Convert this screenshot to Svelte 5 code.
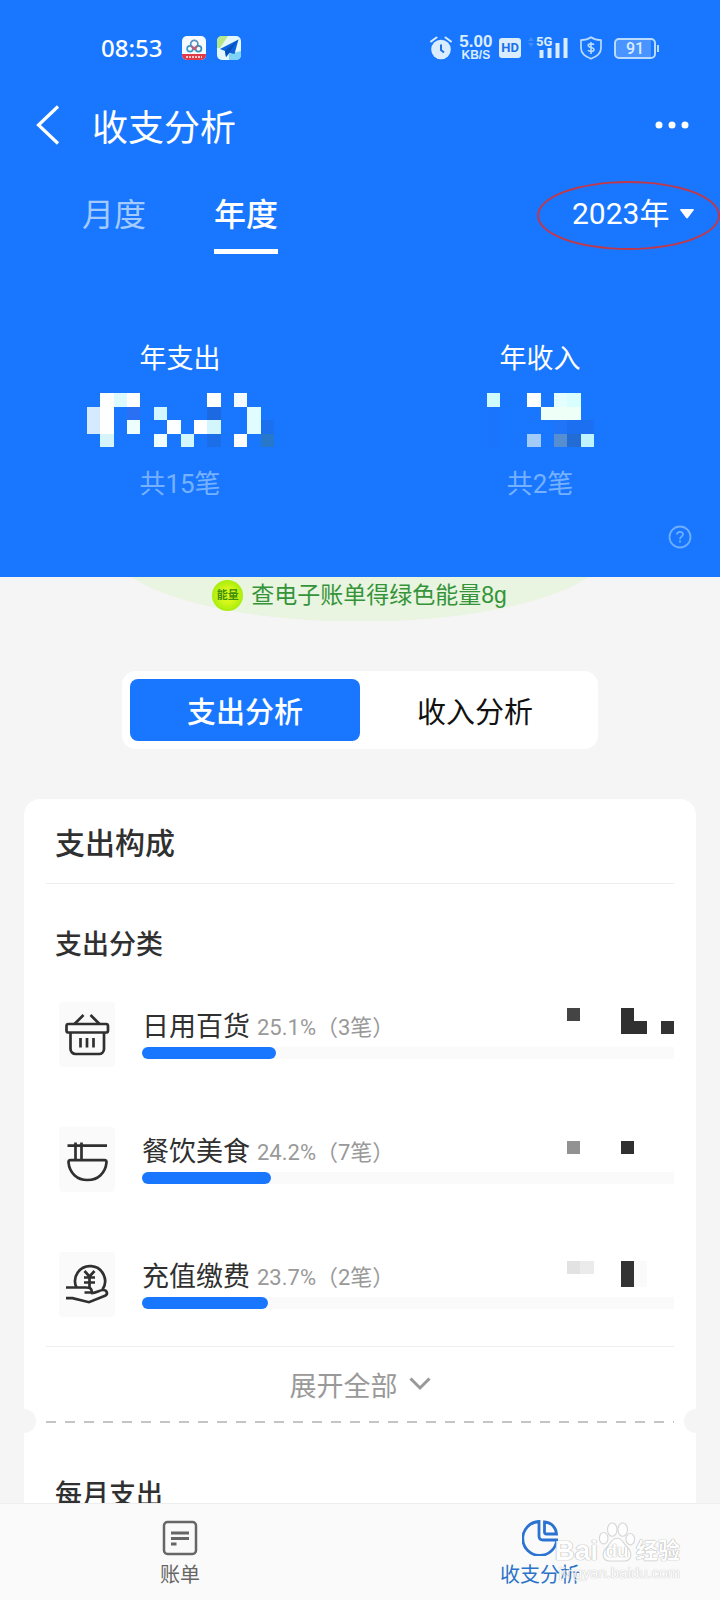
<script>
	let period = 'year'; // 'month' or 'year'
	let year = '2023';
	let analysis = 'expense'; // 'expense' or 'income'

	// Masked amounts: [column, row, width, height, colour] in mask cells
	const totals = [
		{
			label: '年支出',
			count: '共15笔',
			columns: 14,
			cells: [
				[1, 0, 1, 3, '#fdffff'], [2, 0, 1, 1, '#dcfbff'], [3, 0, 1, 1, '#ffffff'],
				[9, 0, 1, 1, '#ffffff'], [11, 0, 1, 1, '#f2fbff'], [0, 1, 1, 2, '#d6eafd'],
				[3, 1, 1, 1, '#2a70f2'], [5, 1, 1, 1, '#d3f7ff'], [9, 1, 1, 1, '#1c69e2'],
				[12, 1, 1, 2, '#e0fcff'], [3, 2, 1, 1, '#eefeff'], [6, 2, 1, 1, '#fcffff'],
				[8, 2, 1, 1, '#ffffff'], [9, 2, 1, 1, '#d3f5fc'], [13, 2, 1, 1, '#1b70f0'],
				[1, 3, 1, 1, '#d6f5fb'], [5, 3, 1, 1, '#f0ffff'], [7, 3, 1, 1, '#d3f7ff'],
				[9, 3, 1, 1, '#1b6de8'], [11, 3, 1, 1, '#ffffff'], [13, 3, 1, 1, '#2778ca']
			]
		},
		{
			label: '年收入',
			count: '共2笔',
			columns: 8,
			cells: [
				[0, 0, 1, 1, '#cffbff'], [3, 0, 1, 1, '#fbffff'], [5, 0, 1, 1, '#e4ffff'],
				[6, 0, 1, 1, '#d8feff'], [4, 1, 3, 1, '#eefff8'], [0, 1, 1, 3, '#1a74fc'],
				[5, 2, 1, 1, '#1f74f8'], [6, 2, 2, 1, '#1c6ff0'], [3, 3, 1, 1, '#a3cbf8'],
				[5, 3, 1, 1, '#558fd2'], [6, 3, 1, 1, '#236cd6'], [7, 3, 1, 1, '#bff3ff']
			]
		}
	];

	const categories = [
		{
			icon: 'basket',
			name: '日用百货',
			percent: 25.1,
			count: 3,
			cells: [[0, 0.43, 1, 1, '#444'], [4, 0.43, 1, 2, '#303030'], [5, 1.43, 1, 1, '#303030'], [7, 1.43, 1, 1, '#333']]
		},
		{
			icon: 'bowl',
			name: '餐饮美食',
			percent: 24.2,
			count: 7,
			cells: [[0, 1.05, 1, 1, '#929292'], [4, 1.05, 1, 1, '#303030']]
		},
		{
			icon: 'coin',
			name: '充值缴费',
			percent: 23.7,
			count: 2,
			cells: [[0, 0.65, 1, 1, '#e2e2e2'], [1, 0.65, 1, 1, '#ebebeb'], [4, 0.65, 1, 2, '#333'], [5, 0.65, 1, 2, '#fafafa']]
		}
	];
</script>

<svelte:head>
	<title>收支分析</title>
</svelte:head>

<div class="page">
	<header>
		<div class="status">
			<span class="time">08:53</span>
			<svg class="app-icon" width="24" height="24" viewBox="0 0 24 24">
				<rect width="24" height="24" rx="5" fill="#f7fbff" />
				<path d="M0 18h24V19a5 5 0 0 1-5 5H5a5 5 0 0 1-5-5z" fill="#e03a48" />
				<circle cx="12.300" cy="8" r="3.600" fill="none" stroke="#5a8fc0" stroke-width="1.700" />
				<circle cx="8" cy="12.800" r="2.900" fill="none" stroke="#3a9ac8" stroke-width="1.700" />
				<circle cx="16.500" cy="12.800" r="2.900" fill="none" stroke="#3a8fb8" stroke-width="1.700" />
				<path d="M9.500 10l2.800 3.500 2.800-3.500" fill="none" stroke="#e0506a" stroke-width="1.700" />
				<path d="M4 21h16" stroke="#ffc5c8" stroke-width="2" stroke-dasharray="2 1" />
			</svg>
			<svg class="app-icon" width="24" height="24" viewBox="0 0 24 24">
				<rect width="24" height="24" rx="5" fill="#e4f8fb" />
				<path d="M5 0h6L3 12H0V5a5 5 0 0 1 5-5z" fill="#b5e88a" />
				<path d="M12 18l12-3v4a5 5 0 0 1-5 5h-7z" fill="#7fd3f7" />
				<path d="M21.500 3.500L3 13l5 2 1 6 3.500-4 5 1z" fill="#0a63dc" />
				<path d="M21.500 3.500L8 15l1 6z" fill="#0850b8" />
			</svg>

			<div class="indicators">
				<svg width="22" height="24" viewBox="0 0 22 24">
					<circle cx="11" cy="13.500" r="9.800" fill="#d9edff" />
					<path d="M1 5.500L6.500 1.500M21 5.500L15.500 1.500" stroke="#d9edff" stroke-width="2" stroke-linecap="round" />
					<path d="M11 8.500v5.500l3 2.500" fill="none" stroke="#1c6fe8" stroke-width="2" />
				</svg>
				<div class="speed"><b>5.00</b><span>KB/S</span></div>
				<span class="hd">HD</span>
				<div class="signal">
					<span>5G</span>
					<svg width="40" height="24" viewBox="0 0 40 24">
						<path d="M0 5l3-4 3 4zM0 7l3 4 3-4z" fill="#3f8cff" />
						<path d="M13.500 14v8M21.500 12v10M29.500 7v15M37.500 2v20" stroke="#d9edff" stroke-width="4" />
					</svg>
				</div>
				<svg class="shield" width="22" height="24" viewBox="0 0 22 24">
					<path d="M11 1.200c2.800 2 6 2.800 10 3V12c0 5-4 8.500-10 10.800C5 20.500 1 17 1 12V4.200c4-.2 7.200-1 10-3z" fill="none" stroke="#b9dbff" stroke-width="1.700" />
					<path d="M14 8.800c-.8-1.200-5.800-1.600-5.800.8s5.800 1.400 5.800 3.900-5 2.200-6 .6M11 6v12" fill="none" stroke="#b9dbff" stroke-width="1.600" />
				</svg>
				<span class="battery">91</span>
			</div>
		</div>

		<div class="title-bar">
			<button class="back" aria-label="返回">
				<svg width="24" height="40" viewBox="0 0 24 40">
					<path d="M22 1.500L2.500 20l19.500 18.500" fill="none" stroke="#fff" stroke-width="3.200" />
				</svg>
			</button>
			<h1>收支分析</h1>
			<button class="more" aria-label="更多">
				<svg width="34" height="8" viewBox="0 0 34 8">
					<circle cx="4" cy="4" r="3.500" fill="#fff" />
					<circle cx="17" cy="4" r="3.500" fill="#fff" />
					<circle cx="30" cy="4" r="3.500" fill="#fff" />
				</svg>
			</button>
		</div>

		<div class="filters">
			<button class="period" class:active={period === 'month'} on:click={() => (period = 'month')}>月度</button>
			<button class="period" class:active={period === 'year'} on:click={() => (period = 'year')}>年度</button>
			<div class="year">
				<select bind:value={year} aria-label="年份">
					<option value="2023">2023年</option>
					<option value="2022">2022年</option>
				</select>
				<svg width="16" height="12" viewBox="0 0 16 12">
					<path d="M2 1h12q1.500 0 .6 1.300L9 9.800q-1 1.200-2 0L1.400 2.300Q.5 1 2 1z" fill="#fff" />
				</svg>
			</div>
		</div>

		<div class="totals">
			{#each totals as total}
				<div class="total">
					<span class="total-label">{total.label}</span>
					<svg
						class="mask"
						width={Math.round((total.columns * 40) / 3)}
						height="54"
						viewBox="0 0 {total.columns} 4"
						preserveAspectRatio="none"
						shape-rendering="crispEdges"
					>
						{#each total.cells as [x, y, w, h, fill]}
							<rect {x} {y} width={w} height={h} {fill} />
						{/each}
					</svg>
					<span class="total-count">{total.count}</span>
				</div>
			{/each}
		</div>

		<button class="help" aria-label="说明">
			<svg width="24" height="24" viewBox="0 0 24 24" fill="none" stroke="#6faeff" stroke-width="1.800">
				<circle cx="12" cy="12" r="10.500" />
				<path d="M9 9.600c0-3.600 6-3.600 6-.4 0 2.400-3 2.400-3 5M12 15.500v2" />
			</svg>
		</button>
	</header>

	<main>
		<a class="energy" href="#energy">
			<span class="energy-ball">能量</span>
			查电子账单得绿色能量8g
		</a>

		<div class="switch">
			<button class:active={analysis === 'expense'} on:click={() => (analysis = 'expense')}>支出分析</button>
			<button class:active={analysis === 'income'} on:click={() => (analysis = 'income')}>收入分析</button>
		</div>

		<section class="card">
			<h2>支出构成</h2>
			<h3>支出分类</h3>
			<ul>
				{#each categories as category}
					<li>
						<svg class="tile" width="56" height="65" viewBox="0 0 56 65" fill="none" stroke="#303030" stroke-width="2.700">
							{#if category.icon === 'basket'}
								<path d="M24.500 13L15.500 22M31.500 13L40.500 22" />
								<rect x="7.500" y="22" width="41.500" height="8.500" rx="2" />
								<path d="M11.500 30.500v16.500a5 5 0 0 0 5 5h23.500a5 5 0 0 0 5-5V30.500M21.500 36v9.500M28 36v9.500M34.500 36v9.500" />
							{:else if category.icon === 'bowl'}
								<path d="M8.500 18.700h39.500M16.500 15.500v17.500M22.500 15.500v17.500" />
								<path d="M11.500 33.200h34q2.200 0 2 2.200C46.500 46 39 53 28.500 53S10.500 46 9.500 35.400q-.2-2.200 2-2.200z" />
							{:else}
								<path d="M17.500 35.500A15 15 0 1 1 43.500 37.500" />
								<path d="M7 35.500h20c5 0 6 1.500 5.500 5h-7M32 41c5 .5 8-3 12-3s5.500 4 2 5.800L30 50.200 13.500 46.200H7" />
								<path d="M25.500 19l5 5.500 5-5.500M30.500 24.500v12M25 25.500h11M25 30.500h11" />
							{/if}
						</svg>
						<div class="detail">
							<div class="detail-head">
								<span class="name">{category.name}</span>
								<span class="share">{category.percent}%（{category.count}笔）</span>
								<svg class="amount" width="107" height="40" viewBox="0 0 8 3" preserveAspectRatio="none" shape-rendering="crispEdges">
									{#each category.cells as [x, y, w, h, fill]}
										<rect {x} {y} width={w} height={h} {fill} />
									{/each}
								</svg>
							</div>
							<div class="track">
								<div class="bar" style="width: {category.percent}%"></div>
							</div>
						</div>
					</li>
				{/each}
			</ul>
			<button class="expand">
				展开全部
				<svg width="22" height="16" viewBox="0 0 22 16">
					<path d="M1.500 2.500L11 12l9.500-9.500" fill="none" stroke="#999" stroke-width="3" />
				</svg>
			</button>
			<div class="tear"></div>
			<h3 class="monthly">每月支出</h3>
		</section>
	</main>

	<nav>
		<a href="#bills">
			<svg width="36" height="36" viewBox="0 0 36 36" fill="none" stroke="#666" stroke-width="2.500">
				<rect x="2" y="2" width="32" height="32" rx="3.500" />
				<path d="M9 13h18M9 18.500h18M9 24h5.500" stroke-width="2.800" />
			</svg>
			账单
		</a>
		<a class="current" href="#analysis">
			<svg width="36" height="36" viewBox="0 0 36 36" fill="none" stroke="#2b73d2" stroke-width="2.800">
				<path d="M17 1.500v14.500q0 4 4 4h13.700A17 17 0 1 1 17 1.500z" />
				<path d="M22.500 2v10q0 2 2 2h10C34 7.500 29.500 2.500 22.500 2z" />
			</svg>
			收支分析
		</a>
		<div class="watermark" aria-hidden="true">
			<div class="brand">
				<span>Bai</span>
				<span class="paw">
					<svg width="38" height="42" viewBox="0 0 40 44" fill="#fff" stroke="#d2d2d2" stroke-width="1.200">
						<ellipse cx="6" cy="18" rx="4.500" ry="6" />
						<ellipse cx="15" cy="9" rx="5" ry="7" />
						<ellipse cx="26" cy="9" rx="5" ry="7" />
						<ellipse cx="34" cy="19" rx="4.500" ry="6" />
						<path d="M20 18c6 0 7 6 11 10 6 6 4 14-3 14-4 0-12 0-16 0-7 0-9-8-3-14 4-4 5-10 11-10z" />
					</svg>
					<i>du</i>
				</span>
				<span class="cn">经验</span>
			</div>
			<div class="site">jingyan.baidu.com</div>
		</div>
	</nav>
</div>

<style>
	:global(body) {
		background: #f5f5f5;
	}

	.page {
		display: flex;
		flex-direction: column;
		height: 100vh;
		overflow: hidden;
		font-family: "Noto Sans CJK SC", sans-serif;
		color: #303030;
	}

	button, select {
		padding: 0;
		border: none;
		background: none;
		font: inherit;
		color: inherit;
		cursor: pointer;
	}

	a {
		color: inherit;
		text-decoration: none;
	}

	svg {
		display: block;
		flex: none;
	}

	h1, h2, h3, ul {
		margin: 0;
		padding: 0;
	}

	h2, h3 {
		font-weight: 500;
	}

	header {
		flex: none;
		background: #1977ff;
		color: #fff;
	}

	.status {
		display: flex;
		align-items: center;
		height: 24px;
		padding: 36px 61px 0 101px;
	}

	.time {
		margin-right: 9px;
		font: 500 24px/24px "Noto Sans", sans-serif;
	}

	.app-icon {
		margin-left: 11px;
	}

	.indicators {
		display: flex;
		align-items: center;
		gap: 7px;
		margin-left: auto;
		color: #d9edff;
		font-family: "Noto Sans", sans-serif;
	}

	.speed {
		display: flex;
		flex-direction: column;
		align-items: center;
		font: 700 12px/12px "Liberation Sans", sans-serif;
	}

	.speed b {
		font-size: 17px;
		line-height: 14px;
	}

	.hd {
		padding: 0 2px;
		border-radius: 3px;
		background: #d9edff;
		color: #1c6fe8;
		font: 700 13px/20px Roboto, sans-serif;
	}

	.signal {
		position: relative;
	}

	.signal span {
		position: absolute;
		top: 0;
		left: 8px;
		background: #1977ff;
		font: 700 13px/12px Roboto, sans-serif;
	}

	.shield {
		margin: 0 5px;
	}

	.battery {
		position: relative;
		width: 38px;
		margin-right: 3px;
		border: 2px solid #b9dbff;
		border-radius: 5px;
		background: linear-gradient(90deg, #4a94ff 91%, #1977ff 91%);
		font: 500 16px/17px Roboto, sans-serif;
		text-align: center;
	}

	.battery::after {
		content: '';
		position: absolute;
		top: 5px;
		right: -5px;
		width: 2px;
		height: 7px;
		background: #b9dbff;
	}

	.title-bar {
		display: flex;
		align-items: center;
		height: 42px;
		margin-top: 44px;
		padding: 0 31px 0 36px;
	}

	h1 {
		margin-left: 32px;
		font-size: 36px;
		line-height: 42px;
		font-weight: 400;
	}

	.more {
		margin-left: auto;
	}

	.filters {
		display: flex;
		align-items: flex-start;
		gap: 68px;
		margin-top: 48px;
		padding: 0 25px 0 82px;
		font-size: 32px;
		line-height: 36px;
	}

	.period {
		padding-bottom: 19px;
		border-bottom: 5px solid transparent;
		color: #a3cbff;
	}

	.period.active {
		border-color: #fff;
		color: #fff;
		font-weight: 500;
	}

	.year {
		position: relative;
		display: flex;
		align-items: center;
		gap: 9px;
		height: 40px;
		margin-left: auto;
	}

	.year select {
		appearance: none;
		outline: none;
		font-family: Roboto, "Noto Sans CJK SC", sans-serif;
		font-size: 30px;
	}

	/* ring round the year picker */
	.year::after {
		content: '';
		position: absolute;
		inset: -13px -25px -16px -35px;
		border: 2px solid #c0394a;
		border-radius: 50%;
		pointer-events: none;
	}

	.totals {
		display: grid;
		grid-template-columns: 1fr 1fr;
		margin-top: 84px;
	}

	.total {
		display: flex;
		flex-direction: column;
		align-items: center;
	}

	.total-label {
		font-size: 27px;
		line-height: 38px;
	}

	.mask {
		margin: 17px 0 18px;
	}

	.total-count {
		font-family: Roboto, "Noto Sans CJK SC", sans-serif;
		font-size: 26px;
		line-height: 38px;
		color: #75b1ff;
	}

	.help {
		display: block;
		margin: 22px 28px 28px auto;
	}

	main {
		flex: 1;
		min-height: 0;
		overflow: hidden;
	}

	.energy {
		display: flex;
		align-items: center;
		justify-content: center;
		gap: 8px;
		height: 36px;
		padding: 0 1px 8px 0;
		background: radial-gradient(ellipse 251px 75px at 50% -30px, #e9f5e0 99%, transparent 100%);
		font-family: "Liberation Sans", "Noto Sans CJK SC", sans-serif;
		font-size: 23px;
		line-height: 36px;
		color: #35943a;
	}

	.energy-ball {
		width: 31px;
		height: 31px;
		border-radius: 50%;
		background: radial-gradient(circle, #d8f81c 30%, #a2ec0a 75%, #86d80a);
		font-size: 11px;
		line-height: 31px;
		font-weight: 700;
		text-align: center;
		color: #3f8f0a;
	}

	.switch {
		display: flex;
		margin: 50px 122px;
		padding: 8px;
		border-radius: 14px;
		background: #fff;
	}

	.switch button {
		flex: 1;
		border-radius: 8px;
		font-size: 29px;
		line-height: 62px;
		color: #111;
	}

	.switch .active {
		background: #1977ff;
		color: #fff;
		font-weight: 500;
	}

	.card {
		margin: 0 24px;
		padding: 0 22px;
		border-radius: 16px;
		background: #fff;
	}

	h2 {
		padding: 20px 9px;
		border-bottom: 1px solid #eee;
		font-size: 30px;
		line-height: 44px;
	}

	h3 {
		padding: 41px 9px;
		font-size: 27px;
		line-height: 36px;
	}

	ul {
		display: flex;
		flex-direction: column;
		gap: 60px;
		padding: 0 0 29px 13px;
		border-bottom: 1px solid #eee;
		list-style: none;
	}

	li {
		display: flex;
		gap: 27px;
	}

	.tile {
		border-radius: 4px;
		background: #fafafa;
	}

	.detail {
		flex: 1;
	}

	.detail-head {
		display: flex;
		height: 45px;
		line-height: 46px;
	}

	.name {
		font-size: 27px;
	}

	.share {
		margin-left: 7px;
		font-family: Roboto, "Noto Sans CJK SC", sans-serif;
		font-size: 22px;
		line-height: 52px;
		color: #999;
	}

	.amount {
		margin-left: auto;
	}

	.track {
		background: #fafafa;
	}

	.bar {
		height: 12px;
		border-radius: 6px;
		background: #1977ff;
	}

	.expand {
		display: flex;
		align-items: center;
		justify-content: center;
		gap: 11px;
		width: 100%;
		height: 74px;
		font-size: 27px;
		color: #999;
	}

	.tear {
		position: relative;
		height: 2px;
		background: repeating-linear-gradient(90deg, #c4c4c4 0 10px, transparent 10px 19px);
	}

	.tear::before, .tear::after {
		content: '';
		position: absolute;
		top: -12px;
		left: -34px;
		width: 24px;
		height: 24px;
		border-radius: 50%;
		background: #f5f5f5;
	}

	.tear::after {
		left: auto;
		right: -34px;
	}

	.monthly {
		padding: 52px 9px;
	}

	nav {
		position: relative;
		flex: none;
		display: grid;
		grid-template-columns: 1fr 1fr;
		border-top: 1px solid #eee;
		background: #fafafa;
	}

	nav a {
		display: flex;
		flex-direction: column;
		align-items: center;
		gap: 6px;
		padding: 16px 0 14px;
		font-size: 20px;
		line-height: 24px;
		color: #666;
	}

	nav .current {
		color: #2b73c8;
	}

	.watermark {
		position: absolute;
		right: 40px;
		bottom: 17px;
		font-family: "Liberation Sans", "Noto Sans CJK SC", sans-serif;
		color: #fff;
		opacity: 0.85;
		pointer-events: none;
	}

	.brand {
		display: flex;
		align-items: flex-end;
		font-size: 28px;
		line-height: 24px;
		font-weight: 700;
		text-shadow: 0 0 1px #999, 0 0 1px #999;
	}

	.paw {
		position: relative;
	}

	.paw i {
		position: absolute;
		left: 0;
		right: 0;
		bottom: 2px;
		font-size: 19px;
		line-height: 20px;
		font-style: normal;
		text-align: center;
	}

	.cn {
		font-size: 22px;
	}

	.site {
		font-size: 15px;
		line-height: 20px;
		text-align: right;
		text-shadow: 0 0 1px #bbb, 0 0 1px #bbb;
	}
</style>
